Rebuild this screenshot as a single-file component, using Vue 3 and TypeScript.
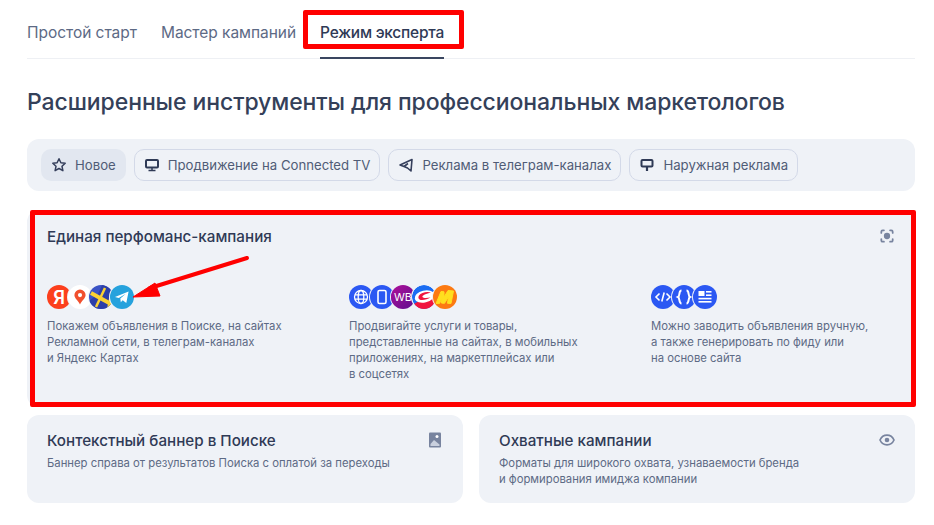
<template>
  <div class="page">
    <nav class="tabs">
      <span v-for="tab in tabs" :key="tab" class="tab" :class="{ active: tab === activeTab }">{{ tab }}</span>
      <span class="mark mark-tab"></span>
    </nav>

    <h1 class="heading">Расширенные инструменты для профессиональных маркетологов</h1>

    <div class="filters">
      <button class="chip selected">
        <svg class="chip-icon" viewBox="0 0 16 16"><path d="M8 1.800l1.900 4 4.300.5-3.200 3 .9 4.400L8 11.500l-3.900 2.200.9-4.400-3.200-3 4.300-.5z" fill="none" stroke="#353f5c" stroke-width="1.500" stroke-linejoin="round" /></svg>
        Новое
      </button>
      <button class="chip">
        <svg class="chip-icon" viewBox="0 0 16 16"><rect x="2" y="3" width="12" height="7.500" rx="1" fill="none" stroke="#2f3a56" stroke-width="2" /><path d="M8 10.500v3M4.500 13.500h7" stroke="#2f3a56" stroke-width="1.500" /></svg>
        Продвижение на Connected TV
      </button>
      <button class="chip">
        <svg class="chip-icon" viewBox="0 0 16 16"><path d="M14 2.500L2 8l4 1.500 3.500 1.500 3.500 3zM6 9.500l4-3" fill="none" stroke="#353f5c" stroke-width="1.600" stroke-linejoin="round" /></svg>
        Реклама в телеграм-каналах
      </button>
      <button class="chip">
        <svg class="chip-icon" viewBox="0 0 16 16"><rect x="2.500" y="3" width="11" height="6.500" rx="1" fill="none" stroke="#2f3a56" stroke-width="2" /><path d="M8 9.500v4.500" stroke="#2f3a56" stroke-width="2.200" /></svg>
        Наружная реклама
      </button>
    </div>

    <section class="card main-card">
      <div class="card-head">
        <h2>Единая перфоманс-кампания</h2>
        <svg class="card-icon" viewBox="0 0 16 16">
          <circle cx="8" cy="8" r="3.600" fill="#78849f" />
          <path d="M1.500 4.500V3c0-.8.700-1.500 1.500-1.500h1.500M11.500 1.500H13c.8 0 1.500.7 1.500 1.500v1.500M14.500 11.500V13c0 .8-.7 1.500-1.500 1.500h-1.500M4.500 14.500H3c-.8 0-1.500-.7-1.500-1.500v-1.500" fill="none" stroke="#78849f" stroke-width="2" stroke-linecap="round" />
        </svg>
      </div>

      <div class="columns">
        <div class="column">
          <div class="logos">
            <span class="logo bg-yandex">
              <svg viewBox="0 0 24 24"><text x="12" y="18.500" text-anchor="middle" class="logo-text" font-size="18">Я</text></svg>
            </span>
            <span class="logo bg-white">
              <svg viewBox="0 0 24 24"><path d="M12 4.500a5.600 5.600 0 0 0-5.600 5.600c0 3.500 3.700 5.200 5.600 9.400 1.900-4.200 5.600-5.900 5.600-9.400A5.600 5.600 0 0 0 12 4.500z" fill="#f1502e" /><circle cx="12" cy="10.100" r="2.100" fill="#fff" /></svg>
            </span>
            <span class="logo bg-navi">
              <svg viewBox="0 0 24 24">
                <path d="M0 16L9 9l4-9h11v24H0z" fill="#2c3fa8" />
                <path d="M2 8l20 11" stroke="#fbd232" stroke-width="4" />
                <path d="M7 22L16 3" stroke="#fbd232" stroke-width="2.500" />
                <path d="M21 8l3 16h-6z" fill="#fbd232" />
              </svg>
            </span>
            <span class="logo bg-telegram">
              <svg viewBox="0 0 24 24"><path d="M5 12l13.600-5.400-2.300 11.300-3.600-2.700-1.900 2-.5-3.600 5.500-4.900-7 4.200z" fill="#fff" /></svg>
            </span>
          </div>
          <p>Покажем объявления в Поиске, на сайтах<br />Рекламной сети, в телеграм-каналах<br />и Яндекс Картах</p>
        </div>

        <div class="column">
          <div class="logos">
            <span class="logo bg-blue">
              <svg viewBox="0 0 24 24" fill="none" stroke="#fff" stroke-width="1.300"><circle cx="12" cy="12" r="6.500" /><ellipse cx="12" cy="12" rx="2.800" ry="6.500" /><path d="M6 9.800h12M6 14.200h12" /></svg>
            </span>
            <span class="logo bg-blue">
              <svg viewBox="0 0 24 24"><rect x="8" y="5.500" width="8" height="13" rx="1.500" fill="none" stroke="#fff" stroke-width="1.600" /></svg>
            </span>
            <span class="logo bg-wb">
              <svg viewBox="0 0 24 24"><text x="12" y="16" text-anchor="middle" class="logo-text thin" font-size="11">WB</text></svg>
            </span>
            <span class="logo bg-white">
              <svg viewBox="0 0 24 24">
                <circle cx="12" cy="12" r="12" fill="#1b6df2" />
                <path d="M24 12A12 12 0 0 1 2 19l5-3c4 2 10 0 13-4z" fill="#f0143f" />
                <ellipse cx="12.500" cy="11.500" rx="10" ry="6" transform="rotate(-14 12.500 11.500)" fill="#fff" />
                <path d="M19 7.500c-4-1.500-10 0-12 3-1.500 2.500 0 4.500 3 4.500 3 0 6-1 8.500-2.500-3 .5-7 1-8-.5-.8-1.500 4-3.500 8.500-4.500z" fill="#f0143f" />
              </svg>
            </span>
            <span class="logo bg-market">
              <svg viewBox="0 0 24 24"><path d="M3 18.500L8 6.500l3 .3V12l4-6.500 5.500.5-2.500 12.500-3.500-.2 1-6.500-4 6.500-3-.2.200-5-2 5.200z" fill="#ffdf1f" stroke="#ffdf1f" stroke-width="1" stroke-linejoin="round" /></svg>
            </span>
          </div>
          <p>Продвигайте услуги и товары,<br />представленные на сайтах, в мобильных<br />приложениях, на маркетплейсах или<br />в соцсетях</p>
        </div>

        <div class="column">
          <div class="logos">
            <span class="logo bg-blue">
              <svg viewBox="0 0 24 24" fill="none" stroke="#fff" stroke-width="1.600"><path d="M8.500 8.500L5 12l3.500 3.500M15.500 8.500L19 12l-3.500 3.500M13.200 7.500l-2.400 9" /></svg>
            </span>
            <span class="logo bg-blue">
              <svg viewBox="0 0 24 24" fill="none" stroke="#fff" stroke-width="2"><path d="M9.500 5.500c-3 0-1.300 5.500-3.500 6.500 2.200 1 .5 6.500 3.500 6.500M14.500 5.500c3 0 1.300 5.500 3.500 6.500-2.200 1-.5 6.500-3.500 6.500" /></svg>
            </span>
            <span class="logo bg-blue">
              <svg viewBox="0 0 24 24" fill="#fff"><rect x="5.500" y="6" width="6" height="5" /><rect x="13" y="6" width="5.500" height="1.600" /><rect x="13" y="9.400" width="5.500" height="1.600" /><rect x="5.500" y="12.800" width="13" height="1.600" /><rect x="5.500" y="16" width="13" height="1.600" /></svg>
            </span>
          </div>
          <p>Можно заводить объявления вручную,<br />а также генерировать по фиду или<br />на основе сайта</p>
        </div>
      </div>
    </section>

    <div class="bottom-row">
      <section class="card">
        <div class="card-head">
          <h2>Контекстный баннер в Поиске</h2>
          <svg class="card-icon" viewBox="0 0 16 16">
            <rect x="2" y="0.500" width="12" height="15" rx="1" fill="#78849f" />
            <circle cx="10" cy="4.500" r="1.500" fill="#fff" />
            <path d="M3.500 12l3.500-4 5.500 4.500V14h-9z" fill="#c9d0de" />
          </svg>
        </div>
        <p>Баннер справа от результатов Поиска с оплатой за переходы</p>
      </section>
      <section class="card">
        <div class="card-head">
          <h2>Охватные кампании</h2>
          <svg class="card-icon" viewBox="0 0 16 16">
            <path d="M8 3.200c3.400 0 6 2.600 7 4.800-1 2.200-3.600 4.800-7 4.800S2 10.200 1 8c1-2.200 3.600-4.800 7-4.800z" fill="none" stroke="#78849f" stroke-width="1.700" />
            <circle cx="8" cy="8" r="2.300" fill="#78849f" />
          </svg>
        </div>
        <p>Форматы для широкого охвата, узнаваемости бренда<br />и формирования имиджа компании</p>
      </section>
    </div>

    <!-- red markup lying over the screenshot -->
    <span class="mark mark-card"></span>
    <svg class="arrow" viewBox="0 0 934 525">
      <path d="M247 258L150 288" stroke="#f00" stroke-width="4" stroke-linecap="round" />
      <path d="M133 297L155 283 160 296z" fill="#f00" stroke="#f00" stroke-linejoin="round" />
    </svg>
  </div>
</template>

<script setup lang="ts">
const tabs = ["Простой старт", "Мастер кампаний", "Режим эксперта"];
const activeTab = "Режим эксперта";
</script>

<style>
html,
body {
  margin: 0;
  background: #fff;
}
</style>

<style scoped>
.page {
  position: relative;
  box-sizing: border-box;
  width: 934px;
  height: 525px;
  padding: 0 19px 0 27px;
  overflow: hidden;
  font-family: Inter, "Noto Sans", sans-serif;
  color: #2f3a56;
}

.tabs {
  position: relative;
  display: flex;
  gap: 24px;
  height: 59px;
  box-sizing: border-box;
  border-bottom: 1px solid #eef0f4;
}

.tab {
  padding-top: 23px;
  font-size: 15.500px;
  line-height: 20px;
  color: #5d6a85;
  letter-spacing: -0.04px;
}

.tab.active {
  position: relative;
  color: #2f3a56;
  font-weight: 500;
  letter-spacing: -0.24px;
}

.tab.active::after {
  content: "";
  position: absolute;
  left: 0;
  right: 0;
  bottom: -1px;
  height: 2px;
  background: #3a4660;
}

.heading {
  margin: 28px 0 22px;
  font-size: 23px;
  line-height: 30px;
  font-weight: 500;
  letter-spacing: -0.09px;
  color: #344059;
}

.filters {
  display: flex;
  gap: 8px;
  height: 52px;
  box-sizing: border-box;
  padding: 10px 14px;
  background: #eff2f7;
  border-radius: 12px;
}

.chip {
  display: flex;
  align-items: center;
  gap: 8px;
  height: 32px;
  box-sizing: border-box;
  padding: 0 9px;
  font: inherit;
  font-size: 13.180px;
  color: #505c76;
  background: transparent;
  border: 1px solid #d3d9e8;
  border-radius: 10px;
}

.chip.selected {
  background: #e2e7f0;
  border-color: transparent;
}

.chip-icon {
  width: 16px;
  height: 16px;
  flex: none;
}

.card {
  flex: 1;
  box-sizing: border-box;
  padding: 15px 20px;
  background: #eff2f7;
  border-radius: 12px;
}

.main-card {
  margin-top: 19px;
  height: 197px;
  padding-top: 16px;
}

.card-head {
  display: flex;
  justify-content: space-between;
  align-items: center;
  height: 20px;
}

.card-head h2 {
  margin: 0;
  font-size: 15.200px;
  font-weight: 500;
  color: #2f3a56;
}

.card-icon {
  width: 16px;
  height: 16px;
  flex: none;
}

.main-card .card-icon {
  width: 14px;
  height: 14px;
  margin-right: 1px;
}

.card p {
  margin: 5px 0 0;
  font-size: 11.300px;
  line-height: 16px;
  color: #5d6a85;
}

.columns {
  display: grid;
  grid-template-columns: 302px 302px 1fr;
  margin-top: 39px;
}

.logos {
  display: flex;
  height: 24px;
  margin-bottom: 9px;
}

.logo {
  display: block;
  flex: none;
  width: 24px;
  height: 24px;
  margin-right: -3px;
  border-radius: 50%;
  overflow: hidden;
  box-shadow: 0 0 0 1px #eff2f7;
}

.logo svg {
  display: block;
  width: 24px;
  height: 24px;
}

.logo-text {
  font-family: Inter, sans-serif;
  font-weight: 600;
  fill: #fff;
}

.logo-text.thin {
  font-weight: 400;
}

.bg-yandex {
  background: #fc3f1d;
}

.bg-white {
  background: #fff;
}

.bg-navi {
  background: #3a53c5;
}

.bg-telegram {
  background: #26a2dd;
}

.bg-blue {
  background: #2b58f3;
}

.bg-wb {
  background: linear-gradient(135deg, #b0109a, #5d0f8e);
}

.bg-market {
  background: #fc7a12;
}

.bottom-row {
  display: flex;
  gap: 16px;
  margin-top: 8px;
  height: 88px;
}

.mark {
  position: absolute;
  box-sizing: border-box;
  border: 5px solid #f00;
  border-radius: 2px;
  pointer-events: none;
}

.mark-tab {
  left: 276px;
  top: 10px;
  width: 161px;
  height: 39px;
}

.mark-card {
  left: 30px;
  top: 210px;
  width: 886px;
  height: 197px;
}

.arrow {
  position: absolute;
  left: 0;
  top: 0;
  width: 934px;
  height: 525px;
  pointer-events: none;
}
</style>
